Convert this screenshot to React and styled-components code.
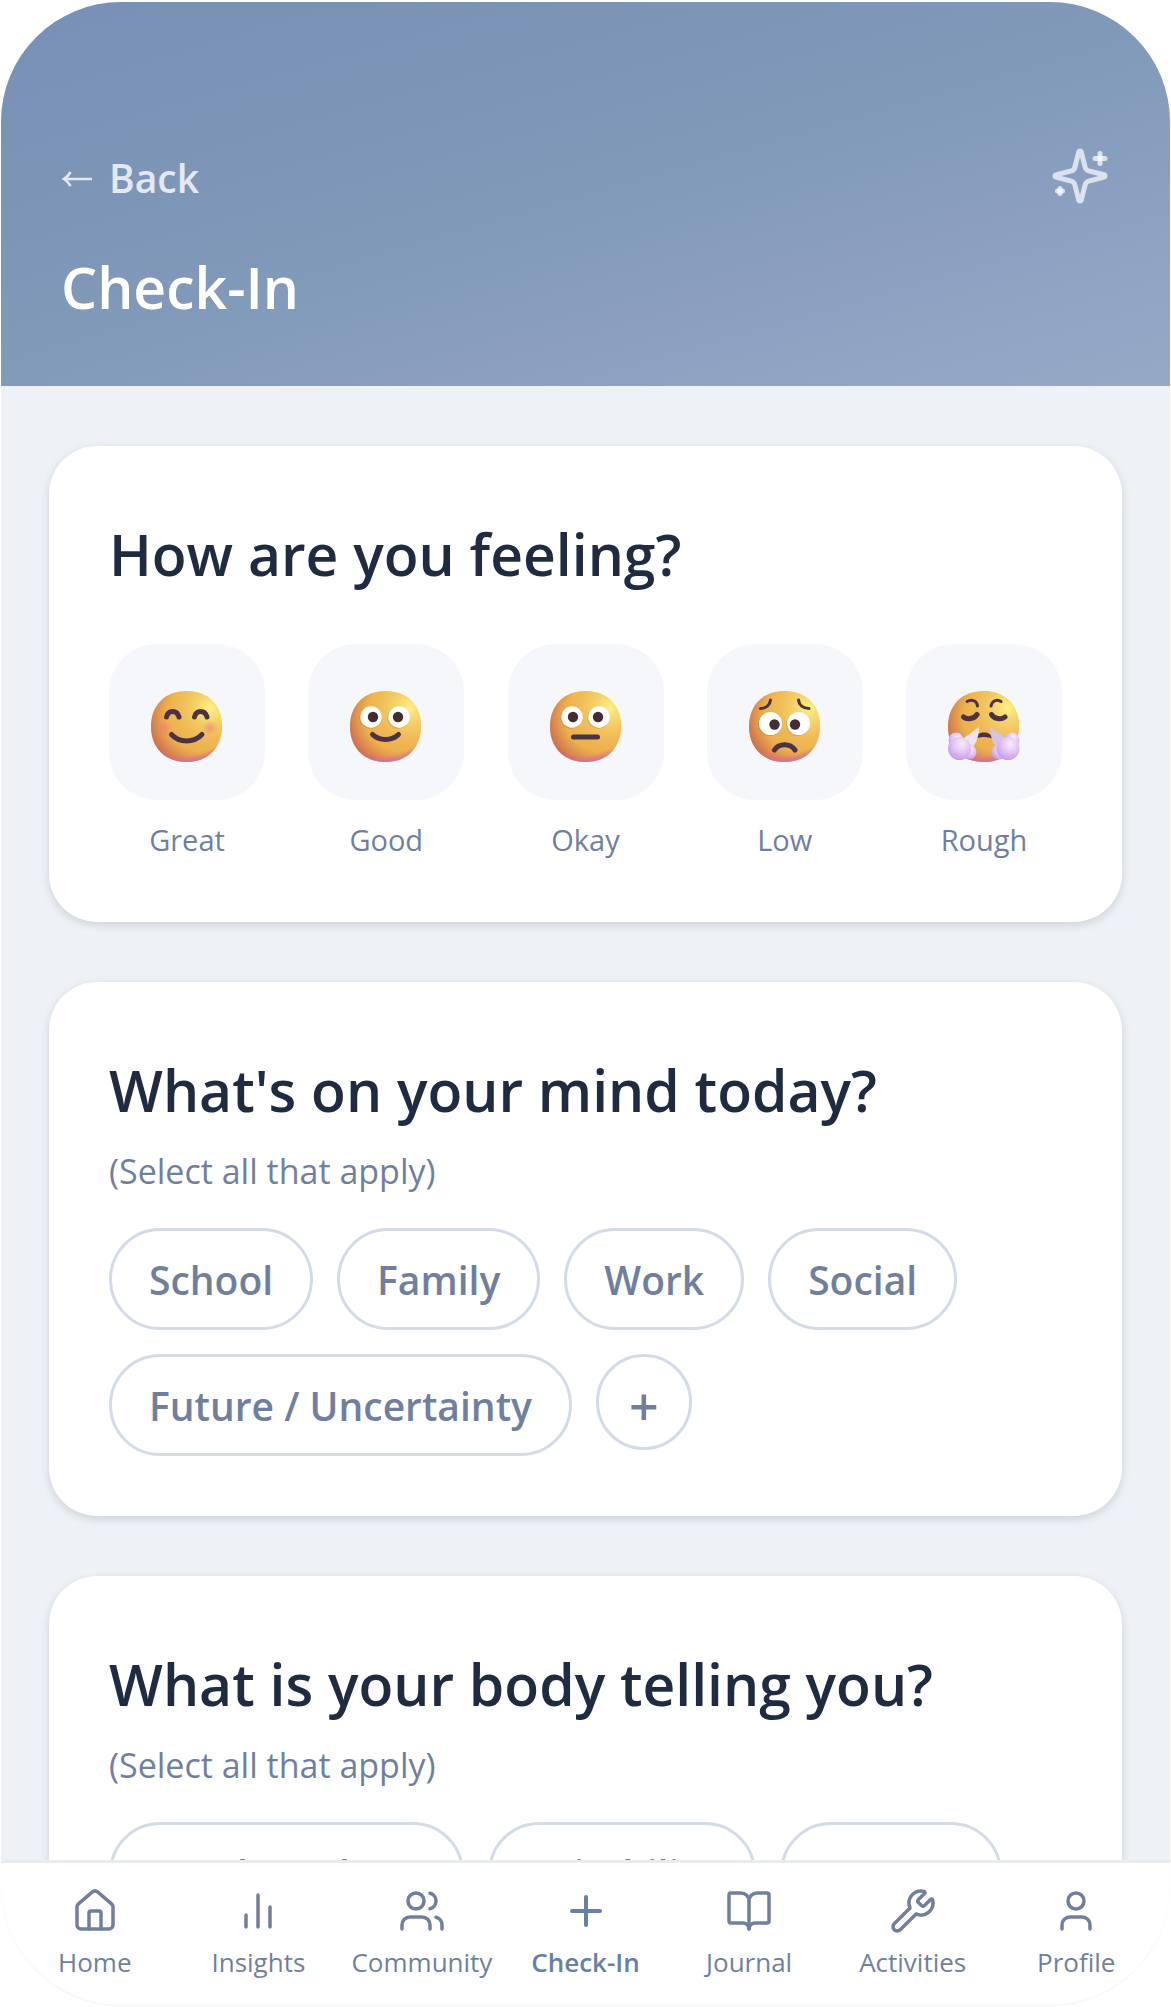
import React from 'react';
import styled, {createGlobalStyle} from "styled-components";
import {House, Users, Plus, BookOpen, Wrench, User} from "lucide-react";

const GlobalStyle = createGlobalStyle`
  *, *::before, *::after {
    box-sizing: border-box;
  }

  body {
    margin: 0;
    background-color: #fff;
    font-family: "Open Sans", "Noto Sans", sans-serif;
  }

  button {
    font-family: inherit;
    cursor: pointer;
  }

  h1, h2, p {
    margin: 0;
  }
`;

const Screen = styled.div`
  height: 100vh;
  padding: 2px 1px;
`;

const Phone = styled.div`
  display: flex;
  flex-direction: column;
  height: 100%;
  overflow: hidden;
  border-radius: 120px;
  background-color: #eef2f7;
  box-shadow: 0 1px 1px rgba(0, 0, 0, 0.05);
`;

const Header = styled.header`
  flex: none;
  padding: 144px 60px 54px;
  background: linear-gradient(164deg, #7790b5 0%, #7d95b7 32%, #829bba 54%, #8a9fc0 68%, #96aac7 100%);
`;

const HeaderRow = styled.div`
  display: flex;
  align-items: center;
  justify-content: space-between;
  height: 60px;
  margin-bottom: 36px;
`;

const BackButton = styled.button`
  display: flex;
  align-items: center;
  gap: 16px;
  padding: 3px 0 0;
  border: 0;
  background: none;
  color: #e4e9f1;
  font-size: 39px;
  line-height: 60px;
  font-weight: 600;
`;

const IconButton = styled.button`
  display: flex;
  padding: 0;
  border: 0;
  background: none;
  color: rgba(255, 255, 255, 0.7);
`;

const PageTitle = styled.h1`
  color: #fff;
  font-size: 57px;
  line-height: 90px;
  font-weight: 600;
`;

const Content = styled.main`
  flex: 1;
  min-height: 0;
  display: flex;
  flex-direction: column;
  gap: 60px;
  padding: 60px 48px;
  overflow-y: auto;
  scrollbar-width: none;
`;

const Card = styled.section`
  flex: none;
  padding: 60px;
  border-radius: 48px;
  background-color: #fff;
  box-shadow: 0 3px 9px rgba(30, 41, 59, 0.16);
`;

const CardTitle = styled.h2`
  margin-bottom: ${({$gap}) => $gap}px;
  color: #1e2b40;
  font-size: 57px;
  line-height: 96px;
  font-weight: 600;
`;

const Hint = styled.p`
  margin-bottom: 30px;
  color: #717f9f;
  font-size: 34px;
  line-height: 54px;
`;

const Moods = styled.div`
  display: flex;
  justify-content: space-between;
`;

const MoodButton = styled.button`
  display: flex;
  flex-direction: column;
  align-items: center;
  gap: 18px;
  width: 156px;
  padding: 0;
  border: 0;
  background: none;
  color: #717f9f;
  font-size: 29px;
  line-height: 44px;
`;

const MoodTile = styled.span`
  display: flex;
  align-items: center;
  justify-content: center;
  width: 156px;
  height: 156px;
  padding-top: 10px;
  border-radius: 48px;
  background-color: #f5f7fb;
`;

const Chips = styled.div`
  display: flex;
  flex-wrap: wrap;
  align-items: flex-start;
  gap: 24px;
`;

const Chip = styled.button`
  height: 102px;
  padding: 2px 37px 0;
  border: 3px solid #d3dbe8;
  border-radius: 51px;
  background-color: #fff;
  color: #717f9f;
  font-size: 39px;
  line-height: 60px;
  font-weight: 600;
`;

const AddChip = styled(Chip)`
  width: 96px;
  height: 96px;
  padding: 8px 0 0;
  font-size: 52px;
`;

const Nav = styled.nav`
  flex: none;
  display: flex;
  height: 145px;
  padding: 0 12px;
  border-top: 3px solid #e8ecf2;
  background-color: #fff;
`;

const NavItem = styled.a`
  flex: 1 1 0;
  min-width: 0;
  display: flex;
  flex-direction: column;
  align-items: center;
  gap: 6px;
  padding-top: 24px;
  color: ${({$active}) => $active ? '#6680a8' : '#717f9f'};
  font-size: 26px;
  line-height: 42px;
  font-weight: ${({$active}) => $active ? 600 : 400};
  text-decoration: none;
`;

const ArrowIcon = () => (
    <svg width="32" height="32" viewBox="0 0 32 32" fill="none" stroke="currentColor" strokeWidth="2.6">
        <path d="M31 17H4"/>
        <path d="M9.500 10Q7 14.500 3 17Q7 19.500 9.500 24"/>
    </svg>
);

// every stroke is its own path, so the crossings come out brighter
const SparklesIcon = () => (
    <svg width="60" height="60" viewBox="0 0 24 24" fill="none" stroke="currentColor" strokeWidth="2"
         strokeLinecap="round" strokeLinejoin="round">
        <path d="M9.937 15.500A2 2 0 0 0 8.500 14.063l-6.135-1.582a.500.500 0 0 1 0-.962L8.500 9.936A2 2 0 0 0 9.937 8.500l1.582-6.135a.500.500 0 0 1 .963 0L14.063 8.500A2 2 0 0 0 15.500 9.937l6.135 1.581a.500.500 0 0 1 0 .964L15.500 14.063a2 2 0 0 0-1.437 1.437l-1.582 6.135a.500.500 0 0 1-.963 0z"/>
        <path d="M20 3v4"/>
        <path d="M22 5h-4"/>
        <path d="M4 17v2"/>
        <path d="M5 18H3"/>
    </svg>
);

const BarsIcon = ({size, strokeWidth}) => (
    <svg width={size} height={size} viewBox="0 0 24 24" fill="none" stroke="currentColor"
         strokeWidth={strokeWidth} strokeLinecap="round">
        <path d="M6 20v-6M12 20V4M18 20V10"/>
    </svg>
);

const HEAD = "M35.5 0C56.8 0 71 14.2 71 35.5S56.8 71 35.5 71S0 56.8 0 35.5S14.2 0 35.5 0Z";
const INK = "#4b3345";

const Face = ({id, children}) => (
    <svg width="72" height="72" viewBox="0 0 72 72" fill="none" strokeLinecap="round" strokeLinejoin="round">
        <defs>
            <linearGradient id={`${id}-base`} x1="0.1" y1="0.1" x2="0.8" y2="0.9">
                <stop offset="0" stopColor="#edb44c"/>
                <stop offset="1" stopColor="#eeb050"/>
            </linearGradient>
            <radialGradient id={`${id}-light`} cx="0.84" cy="0.24" r="0.62">
                <stop offset="0" stopColor="#fdf283"/>
                <stop offset="1" stopColor="#f3c45f" stopOpacity="0"/>
            </radialGradient>
            <radialGradient id={`${id}-edge`} cx="0.7" cy="0.36" r="0.8">
                <stop offset="0.6" stopColor="#c9604c" stopOpacity="0"/>
                <stop offset="1" stopColor="#c4564f" stopOpacity="0.9"/>
            </radialGradient>
            <radialGradient id={`${id}-pink`} cx="0.46" cy="0.1" r="0.92">
                <stop offset="0.88" stopColor="#dc6d94" stopOpacity="0"/>
                <stop offset="1" stopColor="#d467b8"/>
            </radialGradient>
            <radialGradient id={`${id}-blush`}>
                <stop offset="0" stopColor="#ec7d7c" stopOpacity="0.6"/>
                <stop offset="1" stopColor="#ef7f80" stopOpacity="0"/>
            </radialGradient>
            <radialGradient id={`${id}-puff`} cx="0.6" cy="0.3" r="0.75">
                <stop offset="0" stopColor="#f8edfd"/>
                <stop offset="0.5" stopColor="#e2c3f6"/>
                <stop offset="1" stopColor="#c297ea"/>
            </radialGradient>
        </defs>
        <path d={HEAD} fill={`url(#${id}-base)`}/>
        <path d={HEAD} fill={`url(#${id}-light)`}/>
        <path d={HEAD} fill={`url(#${id}-edge)`}/>
        <path d={HEAD} fill={`url(#${id}-pink)`}/>
        {children}
    </svg>
);

const Eye = ({x, y, r = 10.7, px, py = y}) => (
    <>
        <circle cx={x - 1} cy={y + 1} r={r} fill="#b5782f" opacity="0.35"/>
        <circle cx={x} cy={y} r={r} fill="#fff"/>
        <circle cx={px} cy={py} r="5.2" fill="#452c35"/>
    </>
);

const GreatFace = () => (
    <Face id="great">
        <circle cx="14" cy="37" r="8" fill="url(#great-blush)"/>
        <circle cx="59" cy="37" r="8" fill="url(#great-blush)"/>
        <g stroke={INK} strokeWidth="5">
            <path d="M15.500 26C17 18.500 26 18.500 28 26"/>
            <path d="M43.500 26C45 18.500 54 18.500 56 26"/>
            <path d="M20.500 43.500C28 52 43 52 51 43.500"/>
        </g>
    </Face>
);

const GoodFace = () => (
    <Face id="good">
        <Eye x={21} y={26} px={23}/>
        <Eye x={49} y={26} px={48}/>
        <path d="M22.500 43.500C29 50 42 50 48.500 43.500" stroke={INK} strokeWidth="5"/>
    </Face>
);

const OkayFace = () => (
    <Face id="okay">
        <Eye x={22} y={26} px={23}/>
        <Eye x={49} y={26} px={48}/>
        <path d="M23.500 46H47.500" stroke={INK} strokeWidth="5"/>
    </Face>
);

const LowFace = () => (
    <Face id="low">
        <Eye x={21.5} y={32.5} r={11.5} px={25.5} py={33.5}/>
        <Eye x={49.5} y={32.5} r={11.5} px={46} py={33.5}/>
        <g stroke={INK}>
            <path d="M11.500 17.500C17 17.500 21 14 21.500 9" strokeWidth="3"/>
            <path d="M49.500 9C50 14 54 17.500 60 17.500" strokeWidth="3"/>
            <path d="M25.500 59C30 52 41 52 46 59" strokeWidth="5"/>
        </g>
    </Face>
);

const RoughFace = () => (
    <Face id="rough">
        <g stroke={INK}>
            <path d="M19 10.500C24 7.500 29 10 29.500 15" strokeWidth="3"/>
            <path d="M43 15C44 10 49 7.500 53 10.500" strokeWidth="3"/>
            <path d="M15.500 26C19 29 26 28 29 23.500" strokeWidth="5"/>
            <path d="M43.500 23.500C46 28 53 29 57 26" strokeWidth="5"/>
        </g>
        <path d="M26 49C28 39 44 39 46 49C42 45 30 45 26 49Z" fill={INK}/>
        <path d="M31 36L16 47L23 58C29 52 31 44 31 36Z" fill="#eee3f1"/>
        <path d="M42 36L58 47L50 58C44 52 42 44 42 36Z" fill="#d6c4e4"/>
        <circle cx="8" cy="49" r="7.500" fill="url(#rough-puff)"/>
        <circle cx="64" cy="49" r="7.500" fill="url(#rough-puff)"/>
        <circle cx="21" cy="61" r="7.500" fill="url(#rough-puff)"/>
        <circle cx="51" cy="61" r="7.500" fill="url(#rough-puff)"/>
        <circle cx="11.500" cy="57.500" r="11.500" fill="url(#rough-puff)"/>
        <circle cx="60" cy="57.500" r="11.500" fill="url(#rough-puff)"/>
    </Face>
);

const MOODS = [
    {label: 'Great', Icon: GreatFace},
    {label: 'Good', Icon: GoodFace},
    {label: 'Okay', Icon: OkayFace},
    {label: 'Low', Icon: LowFace},
    {label: 'Rough', Icon: RoughFace},
];

const TOPICS = ['School', 'Family', 'Work', 'Social', 'Future / Uncertainty'];
const SYMPTOMS = ['Fast heartbeat', 'Irritability', 'Nausea'];

const NAV = [
    {label: 'Home', Icon: House},
    {label: 'Insights', Icon: BarsIcon},
    {label: 'Community', Icon: Users},
    {label: 'Check-In', Icon: Plus, active: true},
    {label: 'Journal', Icon: BookOpen},
    {label: 'Activities', Icon: Wrench},
    {label: 'Profile', Icon: User},
];

const App = () => {
    return (
        <Screen>
            <GlobalStyle/>
            <Phone>
                <Header>
                    <HeaderRow>
                        <BackButton type="button"><ArrowIcon/>Back</BackButton>
                        <IconButton type="button" aria-label="Suggestions"><SparklesIcon/></IconButton>
                    </HeaderRow>
                    <PageTitle>Check-In</PageTitle>
                </Header>
                <Content>
                    <Card>
                        <CardTitle $gap={42}>How are you feeling?</CardTitle>
                        <Moods>
                            {MOODS.map(({label, Icon}) => (
                                <MoodButton type="button" key={label}>
                                    <MoodTile><Icon/></MoodTile>
                                    {label}
                                </MoodButton>
                            ))}
                        </Moods>
                    </Card>
                    <Card>
                        <CardTitle $gap={6}>What's on your mind today?</CardTitle>
                        <Hint>(Select all that apply)</Hint>
                        <Chips>
                            {TOPICS.map(topic => <Chip type="button" key={topic}>{topic}</Chip>)}
                            <AddChip type="button" aria-label="Add topic">+</AddChip>
                        </Chips>
                    </Card>
                    <Card>
                        <CardTitle $gap={6}>What is your body telling you?</CardTitle>
                        <Hint>(Select all that apply)</Hint>
                        <Chips>
                            {SYMPTOMS.map(symptom => <Chip type="button" key={symptom}>{symptom}</Chip>)}
                        </Chips>
                    </Card>
                </Content>
                <Nav>
                    {NAV.map(({label, Icon, active}) => (
                        <NavItem href="#" key={label} $active={active} aria-current={active ? 'page' : undefined}>
                            <Icon size={48} strokeWidth={active ? 2 : 1.75}/>
                            {label}
                        </NavItem>
                    ))}
                </Nav>
            </Phone>
        </Screen>
    );
};

export default App;
